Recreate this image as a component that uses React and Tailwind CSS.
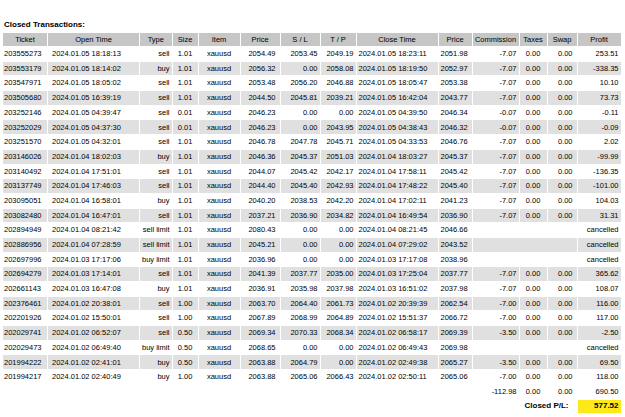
const rows = [
  ["203555273", "2024.01.05 18:18:13", "sell", "1.01", "2054.49", "2053.45", "2049.19", "2024.01.05 18:23:11", "2051.98", "-7.07", "253.51"],
  ["203553179", "2024.01.05 18:14:02", "buy", "1.01", "2056.32", "0.00", "2058.08", "2024.01.05 18:19:50", "2052.97", "-7.07", "-338.35"],
  ["203547971", "2024.01.05 18:05:02", "sell", "1.01", "2053.48", "2056.20", "2046.88", "2024.01.05 18:05:47", "2053.38", "-7.07", "10.10"],
  ["203505680", "2024.01.05 16:39:19", "sell", "1.01", "2044.50", "2045.81", "2039.21", "2024.01.05 16:42:04", "2043.77", "-7.07", "73.73"],
  ["203252146", "2024.01.05 04:39:47", "sell", "0.01", "2046.23", "0.00", "0.00", "2024.01.05 04:39:50", "2046.34", "-0.07", "-0.11"],
  ["203252029", "2024.01.05 04:37:30", "sell", "0.01", "2046.23", "0.00", "2043.95", "2024.01.05 04:38:43", "2046.32", "-0.07", "-0.09"],
  ["203251570", "2024.01.05 04:32:01", "sell", "1.01", "2046.78", "2047.78", "2045.71", "2024.01.05 04:33:53", "2046.76", "-7.07", "2.02"],
  ["203146026", "2024.01.04 18:02:03", "buy", "1.01", "2046.36", "2045.37", "2051.03", "2024.01.04 18:03:27", "2045.37", "-7.07", "-99.99"],
  ["203140492", "2024.01.04 17:51:01", "sell", "1.01", "2044.07", "2045.42", "2042.17", "2024.01.04 17:58:11", "2045.42", "-7.07", "-136.35"],
  ["203137749", "2024.01.04 17:46:03", "sell", "1.01", "2044.40", "2045.40", "2042.93", "2024.01.04 17:48:22", "2045.40", "-7.07", "-101.00"],
  ["203095051", "2024.01.04 16:58:01", "buy", "1.01", "2040.20", "2038.53", "2042.20", "2024.01.04 17:02:11", "2041.23", "-7.07", "104.03"],
  ["203082480", "2024.01.04 16:47:01", "sell", "1.01", "2037.21", "2036.90", "2034.82", "2024.01.04 16:49:54", "2036.90", "-7.07", "31.31"],
  ["202894949", "2024.01.04 08:21:42", "sell limit", "1.01", "2080.43", "0.00", "0.00", "2024.01.04 08:21:45", "2046.66", null, "cancelled"],
  ["202886956", "2024.01.04 07:28:59", "sell limit", "1.01", "2045.21", "0.00", "0.00", "2024.01.04 07:29:02", "2043.52", null, "cancelled"],
  ["202697996", "2024.01.03 17:17:06", "buy limit", "1.01", "2036.96", "0.00", "0.00", "2024.01.03 17:17:08", "2038.96", null, "cancelled"],
  ["202694279", "2024.01.03 17:14:01", "sell", "1.01", "2041.39", "2037.77", "2035.00", "2024.01.03 17:25:04", "2037.77", "-7.07", "365.62"],
  ["202661143", "2024.01.03 16:47:08", "buy", "1.01", "2036.91", "2035.98", "2037.98", "2024.01.03 16:51:02", "2037.98", "-7.07", "108.07"],
  ["202376461", "2024.01.02 20:38:01", "sell", "1.00", "2063.70", "2064.40", "2061.73", "2024.01.02 20:39:39", "2062.54", "-7.00", "116.00"],
  ["202201926", "2024.01.02 15:50:01", "sell", "1.00", "2067.89", "2068.99", "2064.89", "2024.01.02 15:51:37", "2066.72", "-7.00", "117.00"],
  ["202029741", "2024.01.02 06:52:07", "sell", "0.50", "2069.34", "2070.33", "2068.34", "2024.01.02 06:58:17", "2069.39", "-3.50", "-2.50"],
  ["202029473", "2024.01.02 06:49:40", "buy limit", "0.50", "2068.65", "0.00", "0.00", "2024.01.02 06:49:43", "2069.98", null, "cancelled"],
  ["201994222", "2024.01.02 02:41:01", "buy", "0.50", "2063.88", "2064.79", "0.00", "2024.01.02 02:49:38", "2065.27", "-3.50", "69.50"],
  ["201994217", "2024.01.02 02:40:49", "buy", "1.00", "2063.88", "2065.06", "2066.43", "2024.01.02 02:50:11", "2065.06", "-7.00", "118.00"],
]

const cols = [
  ["Ticket", "w-[44px]"],
  ["Open Time", "w-[91px]"],
  ["Type", "w-[31px]"],
  ["Size", "w-[25px]"],
  ["Item", "w-[41px]"],
  ["Price", "w-[39px]"],
  ["S / L", "w-[39px]"],
  ["T / P", "w-[35px]"],
  ["Close Time", "w-[81px]"],
  ["Price", "w-[33px]"],
  ["Commission", "w-[46px]"],
  ["Taxes", "w-[27px]"],
  ["Swap", "w-[29px]"],
  ["Profit", "w-[43px]"],
]

const td = "h-[13.7px] px-[2px] whitespace-nowrap leading-none"

export default function App() {
  return (
    <div className="w-[625px] h-[417px] bg-white text-black pt-[19px] px-[3px]" style={{ fontFamily: '"Liberation Sans", Arial, sans-serif' }}>
      <div className="text-[8px] font-bold mb-[1px] pl-[1px]">Closed Transactions:</div>
      <table className="border-separate border-spacing-[1px] table-fixed text-[7.5px] -ml-[1px]">
        <thead>
          <tr>
            {cols.map(([c, w], i) => (
              <th key={i} className={`${w} ${td} h-[13px] bg-[#c6c6c6] font-normal text-center`}>{c}</th>
            ))}
          </tr>
        </thead>
        <tbody>
          {rows.map((r, i) => {
            const bg = i % 2 ? "bg-[#e0e0e0]" : "bg-white"
            const c = `${td} ${bg}`
            return (
              <tr key={r[0]}>
                <td className={`${c} text-left pl-[1px]`}>{r[0]}</td>
                <td className={`${c} text-left pl-[4px]`}>{r[1]}</td>
                <td className={`${c} text-right`}>{r[2]}</td>
                <td className={`${c} text-center`}>{r[3]}</td>
                <td className={`${c} text-center`}>xauusd</td>
                <td className={`${c} text-right pr-[4px]`}>{r[4]}</td>
                <td className={`${c} text-right`}>{r[5]}</td>
                <td className={`${c} text-right`}>{r[6]}</td>
                <td className={`${c} text-left`}>{r[7]}</td>
                <td className={`${c} text-left`}>{r[8]}</td>
                {r[9] ? (
                  <>
                    <td className={`${c} text-right`}>{r[9]}</td>
                    <td className={`${c} text-center`}>0.00</td>
                    <td className={`${c} text-right pr-[4px]`}>0.00</td>
                  </>
                ) : (
                  <td colSpan={3} className={c}></td>
                )}
                <td className={`${c} text-right`}>{r[10]}</td>
              </tr>
            )
          })}
          <tr>
            <td colSpan={10} className={td}></td>
            <td className={`${td} text-right`}>-112.98</td>
            <td className={`${td} text-center`}>0.00</td>
            <td className={`${td} text-right pr-[4px]`}>0.00</td>
            <td className={`${td} text-right`}>690.50</td>
          </tr>
          <tr>
            <td colSpan={10} className={td}></td>
            <td colSpan={3} className={`${td} text-right font-bold text-[8px] pr-[8px]`}>Closed P/L:</td>
            <td className={`${td} text-right font-bold text-[8px] bg-[#ffe81a]`}>577.52</td>
          </tr>
        </tbody>
      </table>
    </div>
  )
}
